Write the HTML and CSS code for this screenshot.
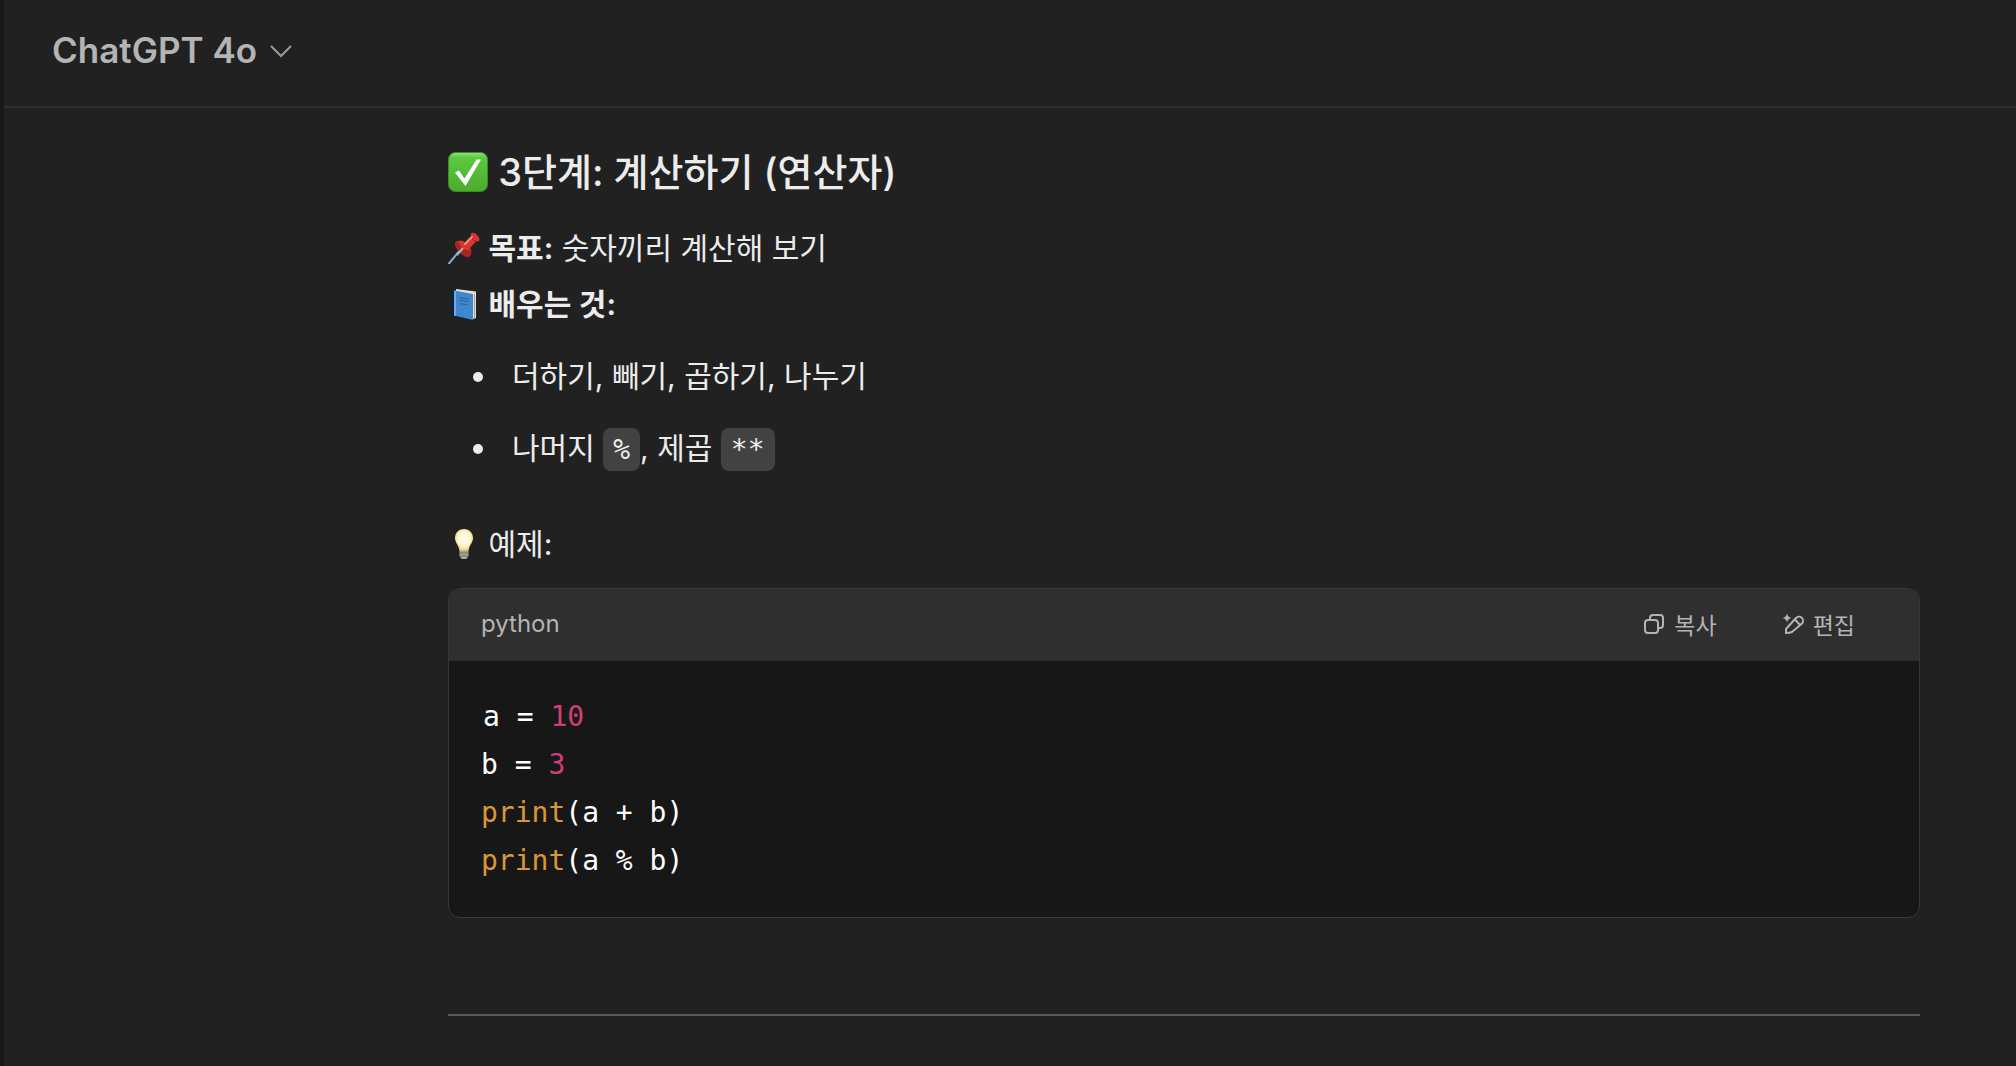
FILE: index.html
```html
<!DOCTYPE html>
<html lang="ko">
<head>
    <meta charset="UTF-8">
    <meta name="viewport" content="width=device-width, initial-scale=1.0">
    <title>ChatGPT</title>
    <link rel="stylesheet" href="styles.css">
</head>
<body>
    <header class="topbar">
        <button class="model-button" type="button">
            ChatGPT 4o
            <svg class="chevron" viewBox="0 0 24 24" aria-hidden="true">
                <path d="M2 8L12 18L22 8"/>
            </svg>
        </button>
    </header>

    <main class="thread">
        <h3>
            <svg class="emoji" viewBox="0 0 40 40" aria-hidden="true">
                <defs>
                    <linearGradient id="green" x1="0" y1="0" x2="0" y2="1">
                        <stop offset="0" stop-color="#8fe27c"/>
                        <stop offset="0.14" stop-color="#5cc840"/>
                        <stop offset="1" stop-color="#4bab2e"/>
                    </linearGradient>
                </defs>
                <rect x="0.5" y="0.5" width="39" height="39" rx="7" fill="url(#green)" stroke="#3d8a27"/>
                <path d="M7 20.5L11 18.5L16.5 26.5L28.500 7.500L33 7.500L17.500 34Z" fill="#fff"/>
            </svg>
            3단계: 계산하기 (연산자)
        </h3>

        <p>
            <svg class="emoji" viewBox="0 0 32 32" aria-hidden="true">
                <path d="M1 31.500L13 17" stroke="#8fa9c2" stroke-width="2" stroke-linecap="round"/>
                <path d="M7 12.500C6 9 13 7.500 17 10L23 4C22 0 26 0 29 3C33 7 32 10 28 9.500L22 16C25 20 22 26 19 25C15 24 8 18 7 12.500Z" fill="#d9372e"/>
                <path d="M7 12.500C9 18 15 24 19 25C22 26 24 21 22.500 17.500C20 20 12 16 11 10C8.500 10 6.500 11 7 12.500Z" fill="#a92520"/>
                <path d="M23 4C24 7 26 9 28.500 9.500" stroke="#8e1f1b" stroke-width="1" fill="none"/>
                <path d="M17 12L24 5" stroke="#f58a80" stroke-width="2" stroke-linecap="round"/>
                <path d="M9 23L15 16" stroke="#9db6ce" stroke-width="2"/>
            </svg>
            <strong>목표:</strong> 숫자끼리 계산해 보기<br>
            <svg class="emoji" viewBox="0 0 32 32" aria-hidden="true">
                <path d="M3 1.500L9 0.500L28 3L28 29L24 32L3 26.500Z" fill="#15213a"/>
                <path d="M8 1L28 3.500V30L25 31L8 27Z" fill="#e7dfd0"/>
                <path d="M6 2.500L25 6V32L6 27.500Z" fill="#3f88cf"/>
                <path d="M6 2.500L8 3V28L6 27.500Z" fill="#6aace6"/>
                <path d="M26.500 6V30" stroke="#a99d8a" stroke-width="1"/>
                <path d="M11 9.500L21 11.500M11 12L21 14M12 15.500L20 17" stroke="#2c65a0" stroke-width="1"/>
            </svg>
            <strong>배우는 것:</strong>
        </p>

        <ul>
            <li>더하기, 빼기, 곱하기, 나누기</li>
            <li>나머지 <code>%</code>, 제곱 <code>**</code></li>
        </ul>

        <p>
            <svg class="emoji" viewBox="0 0 32 32" aria-hidden="true">
                <defs>
                    <radialGradient id="glow" cx="0.5" cy="0.45" r="0.55">
                        <stop offset="0" stop-color="#fffef5"/>
                        <stop offset="0.6" stop-color="#fff6d2"/>
                        <stop offset="1" stop-color="#edcf74"/>
                    </radialGradient>
                </defs>
                <path d="M16 1C10.500 1 7 5 7 10C7 15 11 17 11.500 23H20.500C21 17 25 15 25 10C25 5 21.500 1 16 1Z" fill="url(#glow)"/>
                <path d="M11.500 22.500H20.500V28L18.500 31H13.500L11.500 28Z" fill="#aaa69e"/>
                <path d="M11.500 25H20.500M12 28H20" stroke="#77736c" stroke-width="1"/>
            </svg>
            예제:
        </p>

        <div class="code-block">
            <div class="code-header">
                <span class="lang">python</span>
                <div class="code-actions">
                    <button type="button">
                        <svg viewBox="0 0 24 24" aria-hidden="true">
                            <rect x="3" y="8" width="13" height="13" rx="3"/>
                            <path d="M8 8V6A3 3 0 0 1 11 3H18A3 3 0 0 1 21 6V13A3 3 0 0 1 18 16H16"/>
                        </svg>
                        복사
                    </button>
                    <button type="button">
                        <svg viewBox="0 0 24 24" aria-hidden="true">
                            <path d="M5 21V17L15 6A4 4 0 0 1 21 11.500L11 20Q9 21 5 21ZM14 7.500L19 13"/>
                            <path class="spark" d="M6 1.500Q6.800 5.200 10.500 6Q6.800 6.800 6 10.500Q5.200 6.800 1.500 6Q5.200 5.200 6 1.500Z"/>
                        </svg>
                        편집
                    </button>
                </div>
            </div>
<pre><code>a = <span class="number">10</span>
b = <span class="number">3</span>
<span class="builtin">print</span>(a + b)
<span class="builtin">print</span>(a % b)</code></pre>
        </div>

        <hr>
    </main>
</body>
</html>
```
FILE: styles.css
```css
* {
    box-sizing: border-box;
}
body {
    margin: 0;
    min-height: 100vh;
    border-left: 4px solid #181818;
    background-color: #212121;
    color: #ececec;
    font-family: Inter, "Noto Sans CJK KR", sans-serif;
    font-size: 30px;
    line-height: 56px;
}
button {
    display: flex;
    align-items: center;
    padding: 0;
    border: none;
    background: none;
    color: #b4b4b4;
    font-family: inherit;
    cursor: pointer;
}
svg {
    fill: none;
}

/* Header */
.topbar {
    display: flex;
    align-items: center;
    height: 108px;
    padding: 0 48px 6px;
    border-bottom: 2px solid #2e2e2e;
}
.model-button {
    gap: 12px;
    font-size: 35px;
    font-weight: 600;
}
.chevron {
    width: 24px;
    height: 24px;
    stroke: #9b9b9b;
    stroke-width: 2;
}

/* Message */
.thread {
    padding: 36px 96px 48px 444px;
}
h3 {
    margin: 0 0 20px;
    font-size: 38px;
    font-weight: 500;
}
p {
    margin: 0 0 16px;
}
strong {
    font-weight: 600;
}
.emoji {
    width: 32px;
    height: 32px;
    vertical-align: -5px;
}
h3 .emoji {
    width: 40px;
    height: 40px;
    vertical-align: -6px;
}
ul {
    margin: 0 0 40px;
    padding-left: 64px;
    list-style: none;
}
li {
    position: relative;
    margin-bottom: 16px;
}
li::before {
    content: "";
    position: absolute;
    top: 24px;
    left: -39px;
    width: 10px;
    height: 10px;
    border-radius: 50%;
    background-color: #ececec;
}
code {
    font-family: "DejaVu Sans Mono", monospace;
    font-size: 28px;
}
li code {
    padding: 5px 10px;
    border-radius: 8px;
    background-color: #424242;
    line-height: 1;
}

/* Code block */
.code-block {
    overflow: hidden;
    border: 1px solid #393939;
    border-radius: 12px;
    background-color: #171717;
}
.code-header {
    display: flex;
    align-items: center;
    justify-content: space-between;
    height: 72px;
    padding: 0 64px 2px 32px;
    background-color: #2f2f2f;
    color: #b4b4b4;
}
.lang {
    font-size: 24px;
}
.code-actions {
    display: flex;
    gap: 64px;
}
.code-actions button {
    gap: 8px;
    font-size: 23px;
}
.code-actions svg {
    width: 24px;
    height: 24px;
    stroke: #b4b4b4;
    stroke-width: 2;
}
.code-actions .spark {
    fill: #b4b4b4;
    stroke: none;
}
pre {
    margin: 0;
    padding: 32px;
    color: #fff;
    font-family: "DejaVu Sans Mono", monospace;
    font-size: 28px;
    line-height: 48px;
}
pre code {
    padding: 0 2px;
}
.number {
    color: #d03d77;
}
.builtin {
    color: #dc9635;
}
hr {
    margin: 96px 0 0;
    border: none;
    border-top: 2px solid #595959;
}
```
